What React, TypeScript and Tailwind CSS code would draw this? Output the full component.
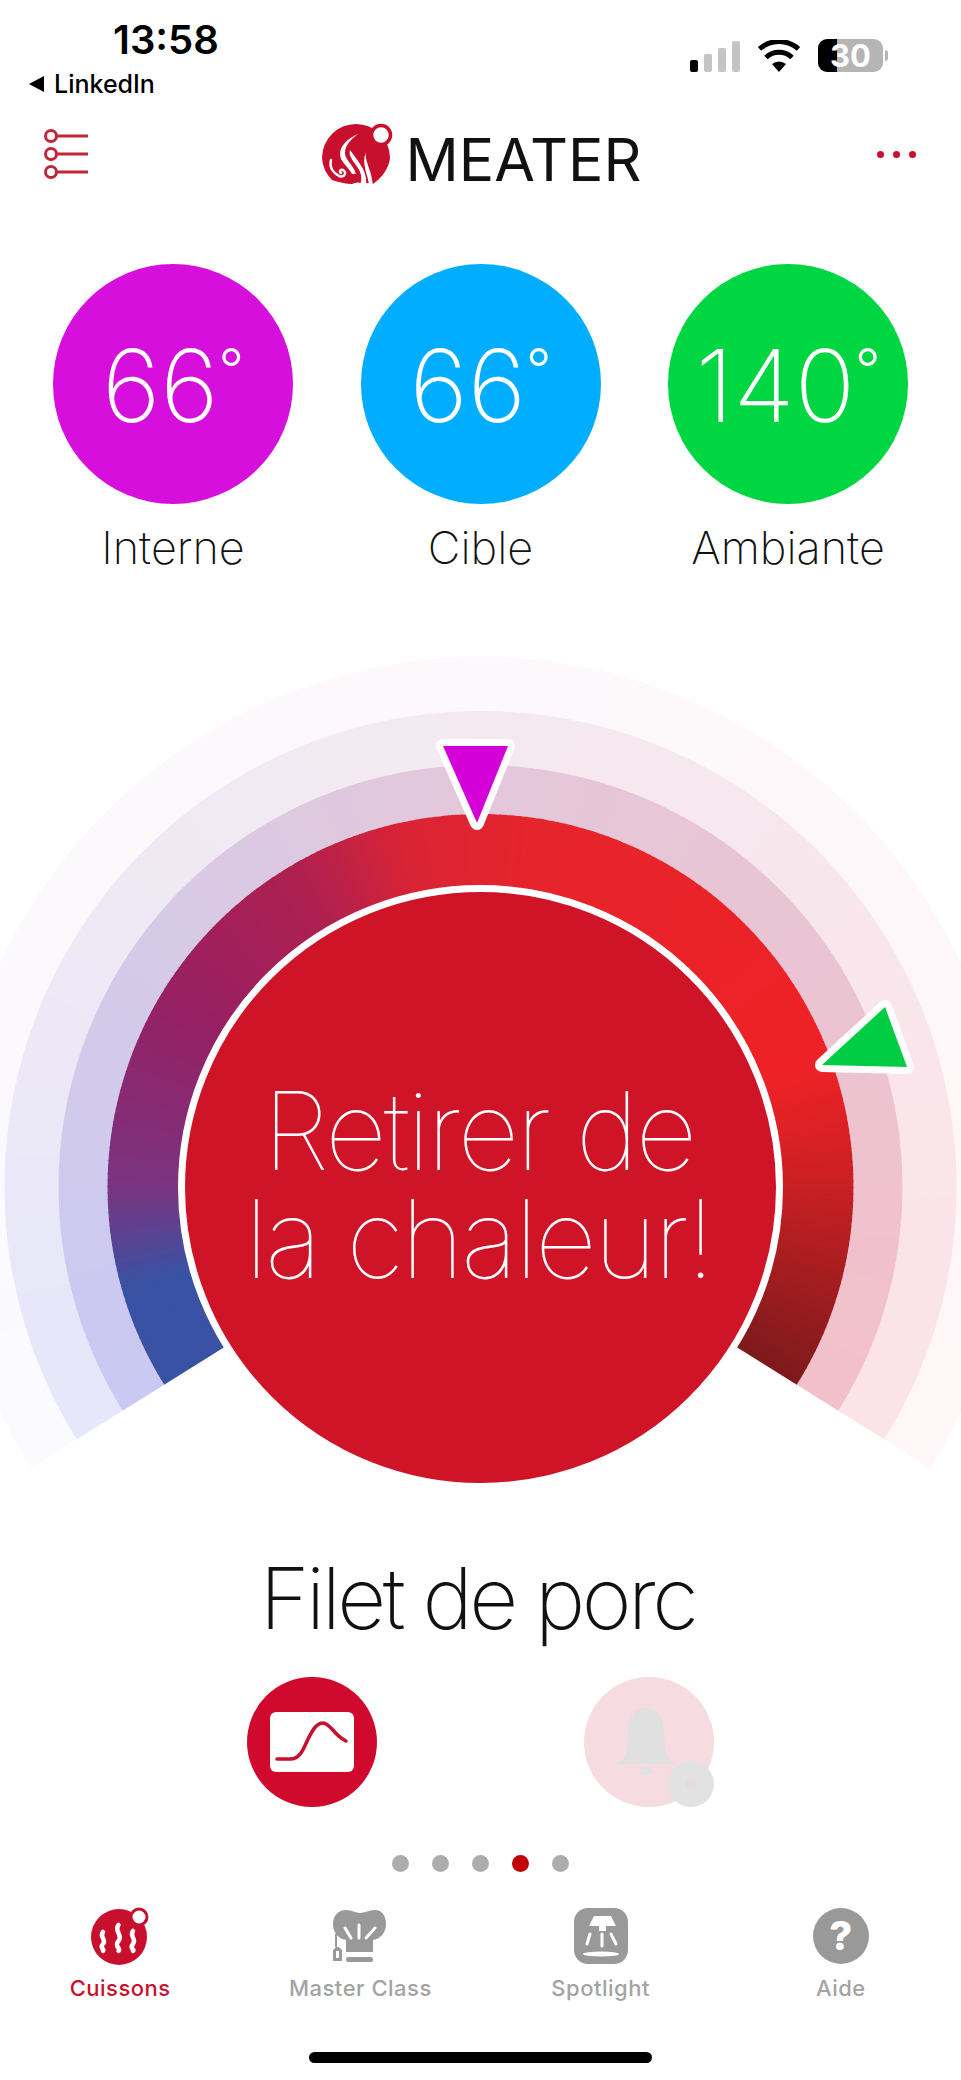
const FONT = "font-['Inter',sans-serif]";

// gauge centre and sweep, in the svg's own pixels
const CX = 480.5;
const CY = 537;
const SWEEP = 122;

type Stop = [number, [number, number, number]];

const mainStops: Stop[] = [
    [-122, [58, 82, 163]],
    [-106, [58, 82, 163]],
    [-90, [122, 52, 128]],
    [-60, [150, 32, 100]],
    [-30, [175, 32, 80]],
    [-12, [218, 36, 52]],
    [10, [230, 36, 44]],
    [70, [238, 34, 38]],
    [88, [205, 32, 36]],
    [122, [125, 26, 28]],
];

const midStops: Stop[] = [
    [-122, [201, 201, 243]],
    [-60, [212, 202, 232]],
    [-10, [226, 200, 220]],
    [40, [232, 197, 213]],
    [122, [243, 192, 202]],
];

const paleStops: Stop[] = [
    [-122, [230, 231, 251]],
    [-10, [244, 234, 241]],
    [60, [248, 230, 236]],
    [122, [251, 227, 231]],
];

const faintStops: Stop[] = [
    [-122, [250, 250, 255]],
    [0, [253, 248, 251]],
    [122, [254, 246, 247]],
];

const colourAt = (stops: Stop[], a: number) => {
    for (let i = 0; i < stops.length - 1; i++) {
        const [a0, c0] = stops[i];
        const [a1, c1] = stops[i + 1];
        if (a <= a1) {
            const t = (a - a0) / (a1 - a0);
            return `rgb(${c0.map((v, k) => Math.round(v + (c1[k] - v) * t)).join(',')})`;
        }
    }
    const last = stops[stops.length - 1][1];
    return `rgb(${last.join(',')})`;
};

const pt = (r: number, deg: number) => {
    const rad = (deg * Math.PI) / 180;
    return `${(CX + r * Math.sin(rad)).toFixed(2)} ${(CY - r * Math.cos(rad)).toFixed(2)}`;
};

const slice = (r0: number, r1: number, a0: number, a1: number) =>
    `M${pt(r0, a0)}A${r0} ${r0} 0 0 1 ${pt(r0, a1)}L${pt(r1, a1)}A${r1} ${r1} 0 0 0 ${pt(r1, a0)}Z`;

const bands = [
    { r0: 476, r1: 530, stops: faintStops },
    { r0: 422, r1: 476, stops: paleStops },
    { r0: 373, r1: 422, stops: midStops },
    { r0: 290, r1: 373, stops: mainStops },
];

const angles = Array.from({ length: SWEEP * 2 }, (_, i) => i - SWEEP);

const Gauge = () => (
    <svg width="961" height="860" viewBox="0 0 961 860" className="block">
        {bands.map((b) => (
            <g key={b.r0}>
                {angles.map((a) => (
                    <path key={a} d={slice(b.r0, b.r1, a, a + 1.15 > SWEEP ? SWEEP : a + 1.15)} fill={colourAt(b.stops, a + 0.5)} />
                ))}
            </g>
        ))}
        <polygon points="443,96 508,96 477,173" fill="#d400d8" stroke="#fff" strokeWidth="14" strokeLinejoin="round" paintOrder="stroke" />
        <polygon points="885,357 907,417 822,415" fill="#00cc44" stroke="#fff" strokeWidth="14" strokeLinejoin="round" paintOrder="stroke" />
    </svg>
);

const Temp = ({ value, label, bg }: { value: string; label: string; bg: string }) => (
    <div className="flex w-[240px] flex-col items-center">
        <div className={`flex h-[240px] w-[240px] items-center justify-center rounded-full pt-[4px] text-[100px] leading-[110px] font-extralight text-white ${bg}`}>
            <span className="flex items-start">
                <span>{value}</span>
                <span className="text-[56px] leading-[76px] font-light">°</span>
            </span>
        </div>
        <div className="mt-[18px] text-[45px] leading-[52px] font-extralight text-[#111]">{label}</div>
    </div>
);

const Logo = () => (
    <svg width="74" height="64" viewBox="0 0 74 64">
        <path d="M2 36A34 34 0 0 1 70 36C69 46 62 56 53 62 50 62 46 60 44 62 40 60 36 60 32 62 26 62 18 60 12 58A34 34 0 0 1 2 36Z" fill="#c8102e" />
        <path d="M38 12C28 16 20 24 20 32 20 40 28 44 32 52H36C33 42 25 38 25 31 25 24 30 18 38 12Z" fill="#fff" />
        <path d="M30 28C28 34 34 40 38 46 42 52 42 58 40 63H46C47 54 44 48 40 42 36 36 33 32 30 28Z" fill="#fff" />
        <path d="M46 30C44 38 51 46 53 63H49C48 52 41 42 46 30Z" fill="#fff" />
        <path d="M11 38C9 45 13 51 19 54 25 56 27 50 23 48 20 47 19 50 21 51" fill="none" stroke="#fff" strokeWidth="2.500" strokeLinecap="round" />
        <circle cx="61" cy="13" r="9.500" fill="#fff" stroke="#c8102e" strokeWidth="3.500" />
    </svg>
);

const Tab = ({ label, active, children }: { label: string; active?: boolean; children: React.ReactNode }) => (
    <div className="flex flex-col items-center">
        <div className="flex h-[58px] items-center justify-center">{children}</div>
        <div className={`mt-[9px] text-[22px] leading-[28px] font-medium tracking-[0.5px] ${active ? 'text-[#c8102e]' : 'text-[#a3a3a3]'}`}>{label}</div>
    </div>
);

export default function App() {
    return (
        <div className={`${FONT} h-[2080px] w-[961px] overflow-hidden bg-white`}>
            {/* Status bar */}
            <div className="flex h-[100px] justify-between">
                <div className="pl-[29px]">
                    <div className="pt-[20px] pl-[84px] text-[40px] leading-[40px] font-semibold text-black">13:58</div>
                    <div className="mt-[10px] flex items-center gap-[10px] text-[25px] leading-[28px] font-medium text-black">
                        <span className="h-0 w-0 border-y-[8px] border-r-[15px] border-y-transparent border-r-black" />
                        LinkedIn
                    </div>
                </div>
                <div className="flex items-end gap-[18px] pr-[73px] pb-[28px]">
                    <div className="flex items-end gap-[6px]">
                        <span className="h-[12px] w-[8px] rounded-[2px] bg-black" />
                        <span className="h-[18px] w-[8px] rounded-[2px] bg-[#c4c4c4]" />
                        <span className="h-[24px] w-[8px] rounded-[2px] bg-[#c4c4c4]" />
                        <span className="h-[31px] w-[8px] rounded-[2px] bg-[#c4c4c4]" />
                    </div>
                    <svg width="42" height="32" viewBox="0 0 42 32">
                        <path d="M21 32l-7-8a11 11 0 0 1 14 0z" fill="#000" />
                        <path d="M8 17.500a19 19 0 0 1 26 0" fill="none" stroke="#000" strokeWidth="5" />
                        <path d="M1.500 9a29 29 0 0 1 39 0" fill="none" stroke="#000" strokeWidth="5" />
                    </svg>
                    <div className="flex items-center gap-[2px]">
                        <div className="flex h-[33px] w-[65px] items-center justify-center rounded-[9px] bg-[linear-gradient(90deg,#000_0,#000_29%,#b5b5b5_29%)] text-[31px] leading-[33px] font-bold text-white">
                            30
                        </div>
                        <span className="h-[11px] w-[3px] rounded-r-full bg-[#b5b5b5]" />
                    </div>
                </div>
            </div>

            {/* Header */}
            <div className="flex h-[108px] items-center justify-between pr-[45px] pl-[43px]">
                <svg width="46" height="50" viewBox="0 0 46 50" fill="none" stroke="#c0273a" strokeWidth="3">
                    <circle cx="8" cy="7" r="5.500" />
                    <circle cx="8" cy="25" r="5.500" />
                    <circle cx="8" cy="43" r="5.500" />
                    <path d="M14 7h31M14 25h31M14 43h31" />
                </svg>
                <div className="flex items-center gap-[12px] pr-[5px]">
                    <Logo />
                    <span className="mt-[11px] text-[59px] leading-none font-normal text-[#111]">MEATER</span>
                </div>
                <div className="flex gap-[9px]">
                    <span className="h-[7px] w-[7px] rounded-full bg-[#c8102e]" />
                    <span className="h-[7px] w-[7px] rounded-full bg-[#c8102e]" />
                    <span className="h-[7px] w-[7px] rounded-full bg-[#c8102e]" />
                </div>
            </div>

            {/* Temperatures */}
            <div className="flex justify-between px-[53px] pt-[56px]">
                <Temp value="66" label="Interne" bg="bg-[#d60fdc]" />
                <Temp value="66" label="Cible" bg="bg-[#00adff]" />
                <Temp value="140" label="Ambiante" bg="bg-[#00d641]" />
            </div>

            {/* Gauge */}
            <div className="relative mt-[76px] h-[902px]">
                <Gauge />
                <div className="absolute top-[235px] left-[178px] flex h-[605px] w-[605px] flex-col items-center justify-center rounded-full border-[7px] border-white bg-[#cf1428] pr-[4px] pb-[5px] text-center text-[108px] font-thin tracking-[-3px] text-white">
                    <div className="h-[108px] leading-[108px]">Retirer de</div>
                    <div className="h-[108px] leading-[108px]">la chaleur!</div>
                </div>
            </div>

            {/* Name */}
            <div className="-mt-[3px] pr-[6px] text-center text-[85px] leading-[100px] font-extralight tracking-[-3.500px] text-[#111]">Filet de porc</div>

            {/* Actions */}
            <div className="mt-[28px] flex justify-center gap-[207px]">
                <div className="flex h-[130px] w-[130px] items-center justify-center rounded-full bg-[#d00a2c]">
                    <svg width="84" height="60" viewBox="0 0 84 60">
                        <rect width="84" height="60" rx="6" fill="#fff" />
                        <path d="M7 47H20C30 47 33 38 38 27 43 17 47 11 53 11 59 11 64 21 70 25 72 27 74 28 76 29" fill="none" stroke="#c8102e" strokeWidth="3.500" strokeLinecap="round" />
                    </svg>
                </div>
                <div className="relative flex h-[130px] w-[130px] items-center justify-center rounded-full bg-[#f6dbe0] pr-[7px]">
                    <svg width="60" height="68" viewBox="0 0 60 68" fill="#e0e0e0">
                        <path d="M30 0C19 0 13 9 12 22L11 42C10 48 6 53 0 56H60C54 53 50 48 49 42L48 22C47 9 41 0 30 0Z" />
                        <rect x="24" y="59" width="12" height="8" rx="4" />
                    </svg>
                    <div className="absolute right-0 bottom-0 flex h-[46px] w-[46px] items-center justify-center rounded-full bg-[#e2e2e2]">
                        <span className="h-[12px] w-[12px] rounded-full bg-[#e5dbdc]" />
                    </div>
                </div>
            </div>

            {/* Page dots */}
            <div className="mt-[48px] flex justify-center gap-[23px]">
                {[0, 1, 2, 3, 4].map((i) => (
                    <span key={i} className={`h-[17px] w-[17px] rounded-full ${i === 3 ? 'bg-[#c00008]' : 'bg-[#adadad]'}`} />
                ))}
            </div>

            {/* Tabs */}
            <div className="mt-[35px] grid grid-cols-4">
                <Tab label="Cuissons" active>
                    <svg width="58" height="58" viewBox="0 0 58 58">
                        <circle cx="28" cy="30" r="28" fill="#c8102e" />
                        <circle cx="48" cy="10" r="8" fill="#fff" stroke="#c8102e" strokeWidth="3" />
                        <path d="M12 25c-4 5 4 8 0 12s2 5 0 7M27.500 18c-5 6 5 10 0 16s3 7 0 10M42 24c-4 5 4 8 0 13s2 5 0 7" fill="none" stroke="#fff" strokeWidth="4.500" strokeLinecap="round" />
                    </svg>
                </Tab>
                <Tab label="Master Class">
                    <svg width="54" height="56" viewBox="0 0 54 56" fill="#999">
                        <path d="M13 44V32C5 31 0 24 0 16 0 7 6 2 13 2 19 2 22 5 27 5 32 5 36 2 42 2 49 2 53 8 53 16 53 24 48 31 40 32V44Z" />
                        <rect x="13" y="49" width="27" height="5" rx="2.500" />
                        <path d="M0 42L3 39H6L9 42V53H0ZM3 43V50H6V43Z" fillRule="evenodd" />
                        <path d="M3 26V39" stroke="#999" strokeWidth="2" />
                        <path d="M12 20L18 30M26 17V30M42 20L33 30" stroke="#fff" strokeWidth="3" strokeLinecap="round" />
                    </svg>
                </Tab>
                <Tab label="Spotlight">
                    <svg width="54" height="56" viewBox="0 0 54 56">
                        <rect width="54" height="56" rx="14" fill="#999" />
                        <path d="M20 8H37L42 18H32V23H25V18H15Z" fill="#fff" />
                        <path d="M16 26L13 36M28 26V38M37 26L42 36" stroke="#fff" strokeWidth="3" strokeLinecap="round" />
                        <ellipse cx="27" cy="46" rx="18" ry="2.500" fill="#fff" />
                    </svg>
                </Tab>
                <Tab label="Aide">
                    <div className="flex h-[56px] w-[56px] items-center justify-center rounded-full bg-[#999] text-[40px] font-extrabold text-white">?</div>
                </Tab>
            </div>

            {/* Home bar */}
            <div className="mx-auto mt-[50px] h-[11px] w-[343px] rounded-full bg-black" />
        </div>
    );
}
